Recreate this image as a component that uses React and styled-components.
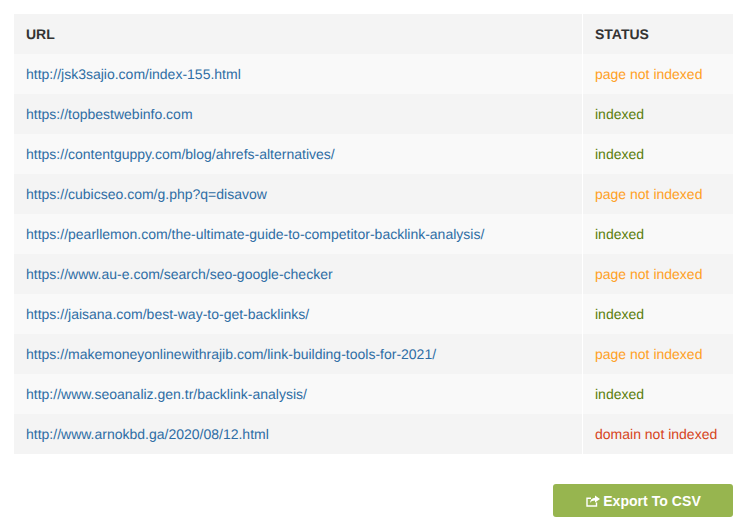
import styled, { createGlobalStyle } from 'styled-components';

const GlobalStyle = createGlobalStyle`
  body {
    margin: 0;
    background: #fff;
    font-family: "Liberation Sans", Arial, sans-serif;
    text-rendering: geometricPrecision;
  }
`;

const Page = styled.div`
  width: 745px;
  height: 531px;
  padding: 14px 12px 0 14px;
  box-sizing: border-box;
  overflow: hidden;
`;

const Table = styled.table`
  width: 719px;
  border-collapse: separate;
  border-spacing: 0;
  table-layout: fixed;
  font-size: 14px;
`;

const HeadCell = styled.th`
  height: 40px;
  padding: 0 12px;
  background: #f4f4f4;
  color: #333;
  font-weight: bold;
  text-align: left;
  box-sizing: border-box;
  & + & {
    border-left: 1px solid #fff;
  }
`;

const Row = styled.tr`
  background: ${(p) => (p.$odd ? '#f9f9f9' : '#f4f4f4')};
`;

const Cell = styled.td`
  height: 40px;
  padding: 0 12px;
  box-sizing: border-box;
  & + & {
    border-left: 1px solid #fff;
  }
`;

const Link = styled.a`
  color: #2e6da4;
  text-decoration: none;
`;

const Status = styled.span`
  color: ${(p) => p.$color};
`;

const Footer = styled.div`
  display: flex;
  justify-content: flex-end;
  margin-top: 30px;
`;

const ExportButton = styled.button`
  width: 180px;
  height: 33px;
  display: flex;
  align-items: center;
  justify-content: center;
  gap: 3px;
  padding: 0 0 0 1px;
  border: 0;
  border-radius: 3px;
  background: #97b54f;
  color: #fff;
  font-family: inherit;
  font-size: 14px;
  font-weight: bold;
  letter-spacing: 0.05px;
`;

const statusColors = {
  'page not indexed': '#ffa01e',
  indexed: '#5a7d0a',
  'domain not indexed': '#d6431a',
};

const rows = [
  ['http://jsk3sajio.com/index-155.html', 'page not indexed'],
  ['https://topbestwebinfo.com', 'indexed'],
  ['https://contentguppy.com/blog/ahrefs-alternatives/', 'indexed'],
  ['https://cubicseo.com/g.php?q=disavow', 'page not indexed'],
  ['https://pearllemon.com/the-ultimate-guide-to-competitor-backlink-analysis/', 'indexed'],
  ['https://www.au-e.com/search/seo-google-checker', 'page not indexed'],
  ['https://jaisana.com/best-way-to-get-backlinks/', 'indexed'],
  ['https://makemoneyonlinewithrajib.com/link-building-tools-for-2021/', 'page not indexed'],
  ['http://www.seoanaliz.gen.tr/backlink-analysis/', 'indexed'],
  ['http://www.arnokbd.ga/2020/08/12.html', 'domain not indexed'],
];

const ShareIcon = () => (
  <svg width="14" height="12" viewBox="0 0 14 12" fill="none">
    <path d="M10.5 7.5V11H1V3.2H5" stroke="#fff" strokeWidth="1.4" />
    <path d="M9 0.5L14 4L9 7.5V5.4C6.8 5.4 5.2 6 4 8C4.2 5 6 2.9 9 2.7V0.5Z" fill="#fff" />
  </svg>
);

const App = () => {
  return (
    <Page>
      <GlobalStyle />
      <Table>
        <colgroup>
          <col style={{ width: 568 }} />
          <col style={{ width: 151 }} />
        </colgroup>
        <thead>
          <tr>
            <HeadCell>URL</HeadCell>
            <HeadCell>STATUS</HeadCell>
          </tr>
        </thead>
        <tbody>
          {rows.map(([url, status], i) => (
            <Row key={url} $odd={i % 2 === 0}>
              <Cell>
                <Link href="#">{url}</Link>
              </Cell>
              <Cell>
                <Status $color={statusColors[status]}>{status}</Status>
              </Cell>
            </Row>
          ))}
        </tbody>
      </Table>
      <Footer>
        <ExportButton>
          <ShareIcon />
          Export To CSV
        </ExportButton>
      </Footer>
    </Page>
  );
};

export default App;
